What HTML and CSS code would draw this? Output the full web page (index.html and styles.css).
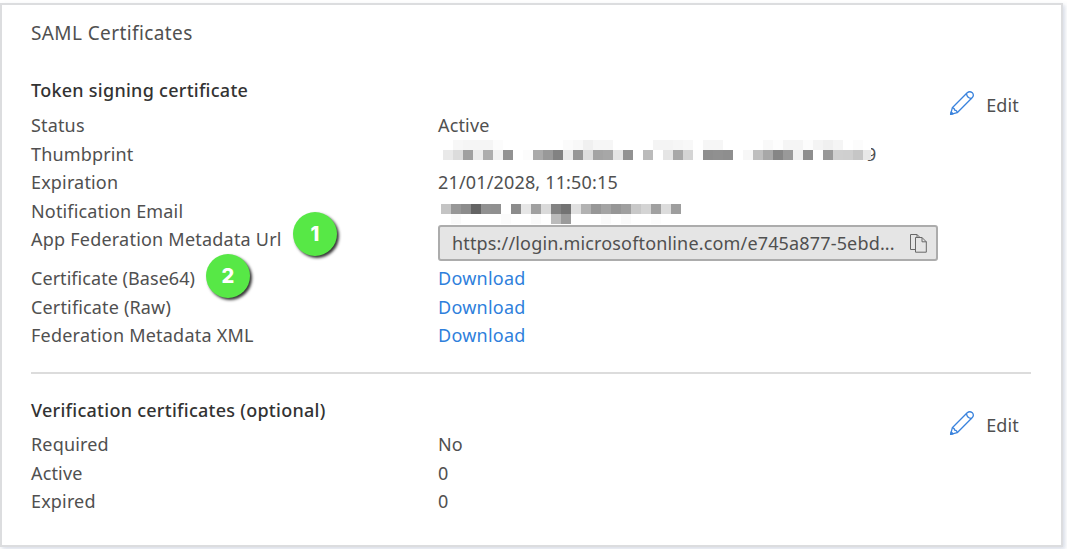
FILE: index.html
```
<!DOCTYPE html>
<html lang="en">
<head>
    <meta charset="UTF-8">
    <meta name="viewport" content="width=device-width, initial-scale=1.0">
    <title>SAML Certificates</title>
    <link rel="stylesheet" href="styles.css">
</head>
<body>

    <div class="card">
        <h1>SAML Certificates</h1>

        <section class="signing">
            <div class="section-head">
                <h2>Token signing certificate</h2>
                <a class="edit">
                    <svg width="26" height="26" viewBox="0 0 26 26" fill="none" stroke="#3a83dd" stroke-width="1.3" stroke-linejoin="round">
                        <path d="M1.6 24.4 L3.3 17.8 L18.2 2.8 Q20.7 .7 23.3 2.7 Q25.5 5.4 23.1 7.8 L8.2 22.7 Z"/>
                        <path d="M3.3 17.8 Q5.5 17.8 5.7 20.2 Q8.1 20.4 8.2 22.7 M17.5 3.5 Q17.9 8 22.4 8.5"/>
                        <path d="M1.6 24.4 L2.2 22 L4 23.8 Z" fill="#3a83dd"/>
                    </svg>
                    <span>Edit</span>
                </a>
            </div>
            <div class="row"><span class="label">Status</span><span>Active</span></div>
            <div class="row">
                <span class="label">Thumbprint</span>
                <span class="masked"><span class="mosaic" id="thumbprint"></span><span class="tail">9</span></span>
            </div>
            <div class="row"><span class="label">Expiration</span><span>21/01/2028, 11:50:15</span></div>
            <div class="row">
                <span class="label">Notification Email</span>
                <span class="masked"><span class="mosaic" id="email"></span></span>
            </div>
            <div class="row url-row">
                <span class="label wide">App Federation Metadata Url<b class="badge badge-one">1</b></span>
                <div class="url-box">
                    <span>https://login.microsoftonline.com/e745a877-5ebd...</span>
                    <svg width="17" height="19" viewBox="0 0 17 19" fill="none" stroke="#686868" stroke-width="1">
                        <path d="M5 15.5 H.5 V.5 H7 L10 3.5"/>
                        <path d="M7 .5 V3.5"/>
                        <path d="M5.5 3.5 H12 L16.3 7.8 V18.2 H5.5 Z"/>
                        <path d="M12 3.5 V7.8 H16.3"/>
                    </svg>
                </div>
            </div>
            <div class="row"><span class="label base64">Certificate (Base64)<b class="badge badge-two">2</b></span><a class="link">Download</a></div>
            <div class="row"><span class="label">Certificate (Raw)</span><a class="link">Download</a></div>
            <div class="row"><span class="label wide">Federation Metadata XML</span><a class="link">Download</a></div>
        </section>

        <section class="verification">
            <div class="section-head">
                <h2>Verification certificates (optional)</h2>
                <a class="edit">
                    <svg width="26" height="26" viewBox="0 0 26 26" fill="none" stroke="#3a83dd" stroke-width="1.3" stroke-linejoin="round">
                        <path d="M1.6 24.4 L3.3 17.8 L18.2 2.8 Q20.7 .7 23.3 2.7 Q25.5 5.4 23.1 7.8 L8.2 22.7 Z"/>
                        <path d="M3.3 17.8 Q5.5 17.8 5.7 20.2 Q8.1 20.4 8.2 22.7 M17.5 3.5 Q17.9 8 22.4 8.5"/>
                        <path d="M1.6 24.4 L2.2 22 L4 23.8 Z" fill="#3a83dd"/>
                    </svg>
                    <span>Edit</span>
                </a>
            </div>
            <div class="row"><span class="label">Required</span><span>No</span></div>
            <div class="row"><span class="label">Active</span><span>0</span></div>
            <div class="row"><span class="label">Expired</span><span>0</span></div>
        </section>
    </div>

    <script>
        // grey levels of the masked values, one hex pair per cell
        const masks = {
            thumbprint: [
                'fff7f5f5f5fcfffffffffffffbf8f0f6f6fffffffff4f4f6f8fff6f6fffffffff9fdf5f5fcf4f0f5fffcff',
                'e9dca0ecadf292fffcaa9982eb96dea4a7e592ffbbffe5a8d4fd8e908efff7bfa88699f08eff99d0cfc6e8'
            ],
            email: [
                'c4978c649190ff8ce6a0da8273e0b297a4969fc8d4a0dc9e',
                'fffafffffffffbfffffaffbb9bfffffffafffafffffcffff'
            ]
        };

        for (const id in masks) {
            const mosaic = document.getElementById(id);
            masks[id].forEach(line => {
                line.match(/../g).forEach(level => {
                    const cell = document.createElement('i');
                    cell.style.backgroundColor = '#' + level + level + level;
                    mosaic.appendChild(cell);
                });
            });
        }
    </script>
</body>
</html>
```
FILE: styles.css
```
* {
    box-sizing: border-box;
}
body {
    margin: 0;
    padding: 3px 4px 2px 0;
    background-color: #fff;
    font-family: "Noto Sans", "Open Sans", sans-serif;
    font-size: 18px;
    letter-spacing: 0.16px;
    color: #505050;
}
.card {
    height: 544px;
    padding: 12px 30px 0 29px;
    border: 2px solid #dcdddf;
    box-shadow: 2px 2px 4px rgba(100, 120, 160, 0.25);
}
h1 {
    margin: 0;
    font-size: 19px;
    font-weight: 400;
    letter-spacing: 0.4px;
    line-height: 32px;
}
h2 {
    margin: 0;
    font-size: 18px;
    font-weight: 500;
    letter-spacing: 0.27px;
    line-height: 34px;
    color: #333;
}
.signing {
    height: 325px;
    padding-top: 24px;
    border-bottom: 2px solid #dcdcdc;
}
.verification {
    padding-top: 19px;
}
.section-head {
    display: flex;
    justify-content: space-between;
    height: 38px;
}
.verification .section-head {
    height: 37px;
}
.edit {
    display: flex;
    gap: 11px;
    align-items: center;
    height: 64px;
    padding-right: 12px;
}
.edit svg {
    margin-bottom: 4px;
}
.row {
    display: grid;
    grid-template-columns: 407px 500px;
    height: 28.5px;
    line-height: 28.5px;
    white-space: nowrap;
}
.label {
    position: relative;
    justify-self: start;
}
.wide {
    letter-spacing: 0.22px;
}
.base64 {
    letter-spacing: 0.05px;
}
.link {
    letter-spacing: 0.25px;
    color: #2f7fdc;
}
.url-row {
    height: 39px;
}
.url-box {
    display: flex;
    justify-content: space-between;
    align-items: center;
    height: 36px;
    padding: 0 9px 0 12px;
    border: 2px solid #acacac;
    border-radius: 3px;
    background-color: #e5e5e5;
}
.badge {
    position: absolute;
    width: 44px;
    height: 44px;
    border-radius: 50%;
    background-color: #57e846;
    box-shadow: 2px 2px 3px rgba(0, 0, 0, 0.8);
    color: #fff;
    font-family: Inter, sans-serif;
    font-size: 20px;
    font-weight: 800;
    letter-spacing: 0;
    line-height: 44px;
    text-align: center;
}
.badge-one {
    left: 262px;
    top: -13px;
}
.badge-two {
    left: 175px;
    top: -10px;
}
.masked {
    display: flex;
}
.mosaic {
    display: grid;
    grid-auto-rows: 10px;
    align-self: start;
    z-index: 1;
}
.mosaic i {
    height: 10px;
}
#thumbprint {
    width: 428px;
    margin: 0.5px 0 0 5px;
    grid-template-columns: repeat(42, 10px) 8px;
}
#email {
    margin: 7.5px 0 0 3px;
    grid-template-columns: repeat(24, 10px);
}
/* the last digit shows half from behind the mosaic */
.tail {
    margin-left: -5px;
}
```
